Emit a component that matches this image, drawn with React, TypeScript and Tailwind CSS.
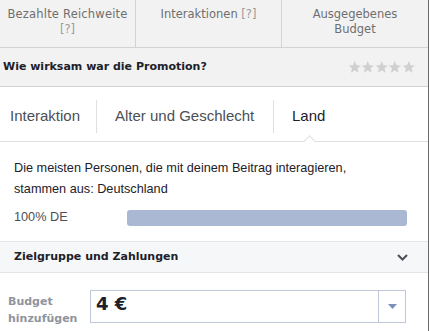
import React from "react";

const tahoma = { fontFamily: '"DejaVu Sans", Verdana, sans-serif' };
const arial = { fontFamily: '"Liberation Sans", Arial, sans-serif' };

function Star() {
  return (
    <svg width="13.5" height="14" viewBox="0 0 24 24" className="shrink-0">
      <path
        d="M12 1.5l3.1 7.2 7.8.6-5.9 5.1 1.8 7.6L12 17.9 5.2 22l1.8-7.6-5.9-5.1 7.8-.6z"
        fill="#d0d0d0"
      />
    </svg>
  );
}

export default function App() {
  return (
    <div className="w-[429px] h-[331px] overflow-hidden bg-white flex">
      <div className="w-[428px] flex flex-col">
        {/* stats header */}
        <div
          className="h-[48px] shrink-0 grid grid-cols-[136px_146px_1fr] bg-[#f2f2f2] border-b border-[#d3d3d3] text-[11.5px] leading-[15px] text-[#6f6f6f] text-center"
          style={tahoma}
        >
          <div className="border-r border-[#d3d3d3] pt-[7px]">
            <div className="tracking-[0.2px]">Bezahlte Reichweite</div>
            <div className="text-[#9a9a9a]">[?]</div>
          </div>
          <div className="border-r border-[#d3d3d3] pt-[7px]">
            Interaktionen <span className="text-[#9a9a9a]">[?]</span>
          </div>
          <div className="pt-[7px]">
            <div>Ausgegebenes</div>
            <div>Budget</div>
          </div>
        </div>

        {/* rating */}
        <div className="h-[39px] shrink-0 flex items-center justify-between bg-[#f2f2f2] border-b border-[#d3d3d3] pl-[3px] pr-[13px]">
          <span
            className="text-[11px] font-bold text-[#1d2129]"
            style={tahoma}
          >
            Wie wirksam war die Promotion?
          </span>
          <div className="flex">
            <Star />
            <Star />
            <Star />
            <Star />
            <Star />
          </div>
        </div>

        {/* tabs */}
        <div
          className="relative h-[55px] shrink-0 flex items-center pt-[4px] border-b border-[#dddfe2] text-[15px]"
          style={arial}
        >
          <div className="w-[97px] h-[33px] flex items-center pl-[10px] text-[#4b4f56] border-r border-[#dddfe2]">
            Interaktion
          </div>
          <div className="w-[177px] h-[33px] flex items-center pl-[18px] text-[#4b4f56] border-r border-[#dddfe2]">
            Alter und Geschlecht
          </div>
          <div className="h-[33px] flex items-center pl-[18px] text-[#1d2129]">
            Land
          </div>
          <div className="absolute left-[305px] bottom-[-5px] w-[9px] h-[9px] bg-white border-l border-t border-[#dddfe2] rotate-45" />
        </div>

        {/* body */}
        <div
          className="h-[99px] shrink-0 px-[14px] pt-[16px] text-[12.7px] text-[#1d2129]"
          style={arial}
        >
          <div className="leading-[21px]">
            Die meisten Personen, die mit deinem Beitrag interagieren,
            <br />
            stammen aus: Deutschland
          </div>
          <div className="flex items-center mt-[8px] text-[#4b4f56]">
            <span className="w-[113px]">100% DE</span>
            <div className="w-[280px] h-[16px] rounded-[3px] bg-[#aab8d3]" />
          </div>
        </div>

        {/* Zielgruppe */}
        <div className="h-[32px] shrink-0 flex items-center justify-between bg-[#f6f7f9] border-y border-[#e5e5e5] pl-[14px] pr-[20px]">
          <span className="text-[11px] font-bold text-[#1d2129]" style={tahoma}>
            Zielgruppe und Zahlungen
          </span>
          <svg width="11" height="7" viewBox="0 0 11 7">
            <path d="M1 1l4.5 4.5L10 1" stroke="#4b4f56" strokeWidth="2" fill="none" />
          </svg>
        </div>

        {/* budget */}
        <div className="flex items-start pl-[8px] pt-[17px]">
          <div
            className="w-[82px] text-[11px] font-bold text-[#90949c] leading-[17px] pt-[3px]"
            style={tahoma}
          >
            Budget
            <br />
            hinzufügen
          </div>
          <div className="w-[316px] h-[33px] flex border border-[#bdc7d8]">
            <div
              className="flex-1 pl-[5px] text-[18px] font-bold text-[#1d2129] leading-[26px]"
              style={tahoma}
            >
              4 €
            </div>
            <div className="w-[27px] border-l border-[#bdc7d8] flex items-center justify-center">
              <svg width="9" height="5" viewBox="0 0 9 5">
                <path d="M0 0h9L4.5 5z" fill="#7b8fb8" />
              </svg>
            </div>
          </div>
        </div>
      </div>
      <div className="w-px bg-[#6a6a6a]" />
    </div>
  );
}
